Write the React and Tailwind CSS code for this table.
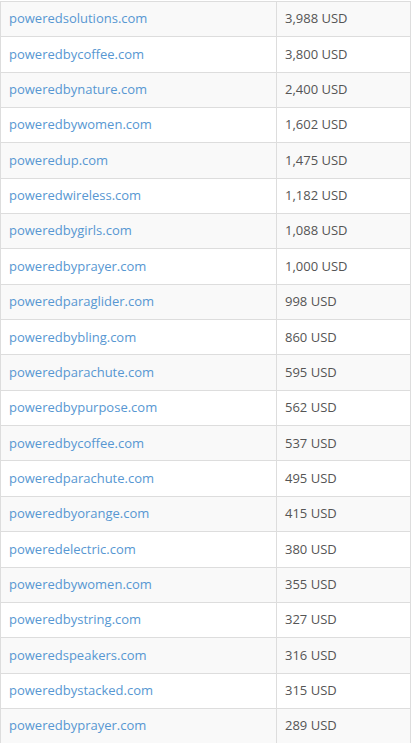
import React from "react";

const rows = [
  ["poweredsolutions.com", "3,988 USD"],
  ["poweredbycoffee.com", "3,800 USD"],
  ["poweredbynature.com", "2,400 USD"],
  ["poweredbywomen.com", "1,602 USD"],
  ["poweredup.com", "1,475 USD"],
  ["poweredwireless.com", "1,182 USD"],
  ["poweredbygirls.com", "1,088 USD"],
  ["poweredbyprayer.com", "1,000 USD"],
  ["poweredparaglider.com", "998 USD"],
  ["poweredbybling.com", "860 USD"],
  ["poweredparachute.com", "595 USD"],
  ["poweredbypurpose.com", "562 USD"],
  ["poweredbycoffee.com", "537 USD"],
  ["poweredparachute.com", "495 USD"],
  ["poweredbyorange.com", "415 USD"],
  ["poweredelectric.com", "380 USD"],
  ["poweredbywomen.com", "355 USD"],
  ["poweredbystring.com", "327 USD"],
  ["poweredspeakers.com", "316 USD"],
  ["poweredbystacked.com", "315 USD"],
  ["poweredbyprayer.com", "289 USD"],
];

export default function App() {
  return (
    <div className="w-[411px] h-[743px] overflow-hidden bg-white" style={{ fontFamily: '"Open Sans", sans-serif' }}>
      <div className="pt-[1px]">
        <table className="w-[411px] border-collapse border-l border-[#dddddd] text-[13px]">
          <tbody>
            {rows.map(([d, p], i) => (
              <tr key={i} className={i % 2 === 0 ? "bg-[#f9f9f9]" : "bg-white"}>
                <td className="h-[35.35px] w-[276px] border border-[#dddddd] px-2 py-0 align-middle">
                  <a className="text-[#5797d2]">{d}</a>
                </td>
                <td className="h-[35.35px] border border-[#dddddd] px-2 py-0 align-middle text-[#555555]">{p}</td>
              </tr>
            ))}
          </tbody>
        </table>
      </div>
    </div>
  );
}
